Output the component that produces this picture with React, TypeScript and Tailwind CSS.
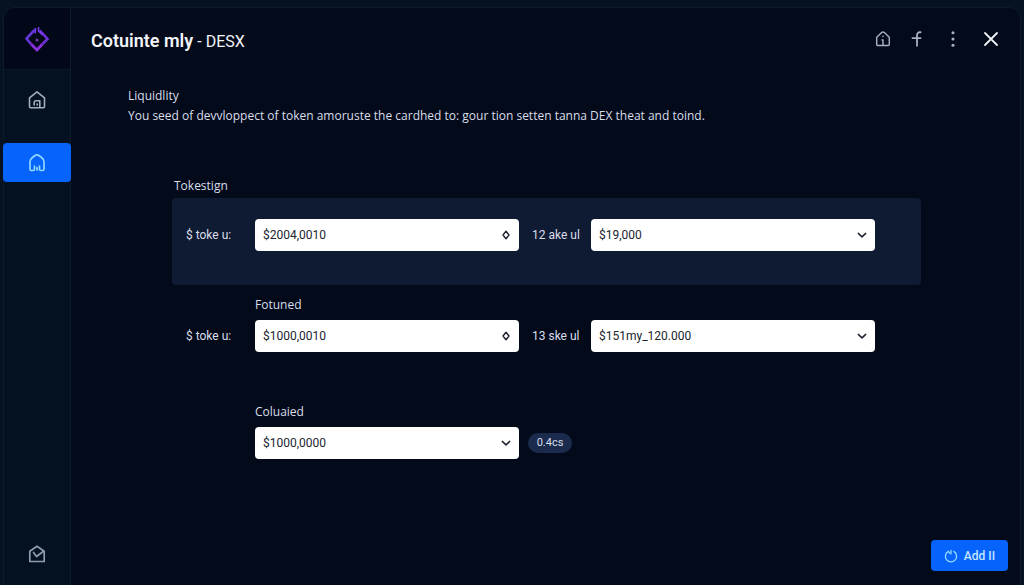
import type { ReactNode } from "react";

function Icon({ size = 20, children, className = "" }: { size?: number; children: ReactNode; className?: string }) {
  return (
    <svg
      width={size}
      height={size}
      viewBox="0 0 20 20"
      fill="none"
      stroke="currentColor"
      strokeWidth="1.6"
      strokeLinecap="round"
      strokeLinejoin="round"
      aria-hidden="true"
      className={className}
    >
      {children}
    </svg>
  );
}

function Logo() {
  return (
    <svg width="28" height="28" viewBox="0 0 28 28" fill="none" aria-hidden="true">
      <path d="M11.500 5 3.500 13.500 8 19" strokeWidth="2.6" stroke="#6236d8" />
      <path d="M8 19 14 25l5.500-6" strokeWidth="2.8" stroke="#8b2fe0" />
      <path d="M19.500 19 24.500 14l-5-5.500-3-3" strokeWidth="2.6" stroke="#7030d8" />
      <path d="M12.300 3v5.500M15.500 2v4l4 4" strokeWidth="1.600" stroke="#7a3cf0" />
      <path d="M8 17v3M20 17v3" strokeWidth="1.600" stroke="#6427b8" />
      <circle cx="14" cy="15" r="1.500" fill="#6b3fae" />
    </svg>
  );
}

function Chevron() {
  return (
    <svg
      width="10"
      height="10"
      viewBox="0 0 10 10"
      fill="none"
      stroke="#1f2430"
      strokeWidth="1.5"
      strokeLinecap="round"
      strokeLinejoin="round"
      aria-hidden="true"
      className="pointer-events-none absolute top-1/2 right-2 -translate-y-1/2"
    >
      <path d="M1.300 3.400 5 6.900l3.700-3.500" />
    </svg>
  );
}

function AmountInput({ id, value }: { id: string; value: string }) {
  return (
    <div className="relative">
      <input
        id={id}
        type="text"
        defaultValue={value}
        className="block h-8 w-full rounded bg-white pr-7 pl-2 text-xs text-[#20242e]"
      />
      <svg
        width="10"
        height="12"
        viewBox="0 0 10 12"
        fill="none"
        stroke="#1f2430"
        strokeWidth="1.400"
        strokeLinejoin="round"
        aria-hidden="true"
        className="pointer-events-none absolute top-1/2 right-2 -translate-y-1/2"
      >
        <path d="M5 2.200 8 6 5 9.800 2 6Z" />
      </svg>
    </div>
  );
}

function AmountSelect({ id, value }: { id: string; value: string }) {
  return (
    <div className="relative">
      <select
        id={id}
        defaultValue={value}
        className="block h-8 w-full appearance-none rounded bg-white pr-7 pl-2 text-xs text-[#20242e]"
      >
        <option>{value}</option>
      </select>
      <Chevron />
    </div>
  );
}

const rowGrid = "grid grid-cols-[56px_264fr_46px_284fr] items-center gap-x-[13px] pr-[46px] pl-3.5 whitespace-nowrap";
const copyFont = "font-['Open_Sans','Noto_Sans',sans-serif] leading-5";

export default function App() {
  return (
    <div className="flex min-h-screen bg-[#071220] px-[3px] pt-[7px] font-['Roboto','Inter',sans-serif] text-xs text-[#d9deea]">
      <div className="flex flex-1 rounded-t-xl border border-b-0 border-[#0d1a2b] bg-[#030a1a]">
        <aside className="flex w-[67px] shrink-0 flex-col rounded-tl-xl border-r border-[#0e1b2c] bg-[#041120]">
          <div className="flex h-[62px] items-center justify-center rounded-tl-xl border-b border-[#0a1726] bg-[#020817]">
            <Logo />
          </div>
          <nav className="flex flex-1 flex-col" aria-label="Main">
            <a href="#home" aria-label="Home" className="flex h-[60px] items-center justify-center text-[#a3adbd]">
              <Icon>
                <path d="M2.500 7.800 10 1.800l7.500 6v8.700a1.200 1.200 0 0 1-1.200 1.200H3.700a1.200 1.200 0 0 1-1.200-1.200Z" />
                <path d="M7.200 15v-2.500a1.700 1.700 0 0 1 1.700-1.700h3.900v6M10.200 14v1" />
              </Icon>
            </a>
            <a
              href="#liquidity"
              aria-label="Liquidity"
              aria-current="page"
              className="-mx-px mt-[13px] flex h-[39px] items-center justify-center rounded bg-[#0663fb] text-[#8fd8ff]"
            >
              <Icon>
                <path
                  d="M7.500 13v3.200c0 .8-.5 1.300-1.300 1.300H4.500c-.8 0-1.500-.6-1.500-1.500V9c0-1.800.7-3.200 2.200-4.300l2.500-1.900a3.800 3.800 0 0 1 4.600 0l2.500 1.900C16.300 5.800 17 7.200 17 9v7c0 .9-.7 1.500-1.500 1.500h-1.700c-.8 0-1.300-.5-1.300-1.300V13M10 14.500v2.500"
                  strokeWidth="1.700"
                />
              </Icon>
            </a>
            <a
              href="#tasks"
              aria-label="Tasks"
              className="mt-auto mb-[11px] flex h-10 items-center justify-center text-[#8f9bae]"
            >
              <Icon>
                <path d="M2.800 7.300 10 2.300l7.200 5v10.200H2.800Z" strokeWidth="1.700" />
                <path d="m6.500 8.500 3 4 7-5.200" strokeWidth="1.700" />
              </Icon>
            </a>
          </nav>
        </aside>

        <div className="flex min-w-0 flex-1 flex-col">
          <header className="flex h-[62px] items-center justify-between pr-[19px] pl-5">
            <h1 className="flex items-baseline gap-1 pt-1 text-lg font-semibold text-[#f2f4f9]">
              Cotuinte mly <span className="text-base font-normal">- DESX</span>
            </h1>
            <div className="flex items-center gap-4 text-[#a9b0c0]">
              <button type="button" aria-label="Home" className="flex h-5 w-4 items-center justify-center">
                <Icon size={18} className="shrink-0">
                  <path d="M3 8 8.500 2.800a2.200 2.200 0 0 1 3 0L17 8v8a1.200 1.200 0 0 1-1.200 1.200H4.200A1.200 1.200 0 0 1 3 16ZM8.800 11H10v6M10 7v.2" />
                </Icon>
              </button>
              <button type="button" aria-label="Share" className="flex size-5 items-center justify-center">
                <Icon size={18}>
                  <path d="M14 2.500h-1a3 3 0 0 0-3 3v12M5 9h9" strokeWidth="2" />
                </Icon>
              </button>
              <button type="button" aria-label="More" className="flex size-5 items-center justify-center">
                <Icon size={18}>
                  <g fill="currentColor" stroke="none">
                    <circle cx="10" cy="3" r="1.700" />
                    <circle cx="10" cy="10" r="1.700" />
                    <circle cx="10" cy="17" r="1.700" />
                  </g>
                </Icon>
              </button>
              <button type="button" aria-label="Close" className="ml-0.5 flex size-5 items-center justify-center text-[#eef1f6]">
                <Icon size={20}>
                  <path d="m4 4 12 12M16 4 4 16" strokeWidth="1.800" />
                </Icon>
              </button>
            </div>
          </header>

          <main className="flex flex-1 flex-col">
            <section className={`${copyFont} mt-4 pl-[57px]`}>
              <h2>Liquidlity</h2>
              <p>
                You seed of devvloppect of token amoruste the cardhed to: gour tion setten tanna DEX theat and toind.
              </p>
            </section>

            <form className="mt-[50px] flex flex-col pr-[99px] pl-[101px]" onSubmit={(e) => e.preventDefault()}>
              <h3 className={`${copyFont} pl-0.5`}>Tokestign</h3>
              <div className={`${rowGrid} mt-0.5 rounded bg-[#0f1b33] pt-[21px] pb-[34px]`}>
                <label htmlFor="token-a">$ toke u:</label>
                <AmountInput id="token-a" value="$2004,0010" />
                <label htmlFor="rate-a">12 ake ul</label>
                <AmountSelect id="rate-a" value="$19,000" />
              </div>

              <div className={`${rowGrid} mt-2.5`}>
                <h3 className={`${copyFont} col-start-2 mb-[5px]`}>Fotuned</h3>
                <label htmlFor="token-b" className="col-start-1">
                  $ toke u:
                </label>
                <AmountInput id="token-b" value="$1000,0010" />
                <label htmlFor="rate-b">13 ske ul</label>
                <AmountSelect id="rate-b" value="$151my_120.000" />
              </div>

              <div className={`${rowGrid} mt-[50px]`}>
                <label htmlFor="total" className={`${copyFont} col-start-2 mb-[5px]`}>
                  Coluaied
                </label>
                <div className="col-start-2">
                  <AmountSelect id="total" value="$1000,0000" />
                </div>
                <span className="-ml-1 flex h-5 w-11 items-center justify-center rounded-full bg-[#1b2b4d] text-[11px]">
                  0.4cs
                </span>
              </div>
            </form>

            <div className="mt-auto flex justify-end pr-3 pb-3.5">
              <button
                type="button"
                className="flex h-[31px] w-[77px] items-center justify-center gap-1.5 rounded bg-[#0663fb] text-xs font-medium text-[#c5e6ff]"
              >
                <Icon size={14} className="text-[#8fd8ff]">
                  <path d="M6 3.500a8 8 0 1 0 8 0M10 2v5M6 3l2 3" strokeWidth="1.900" />
                </Icon>
                Add II
              </button>
            </div>
          </main>
        </div>
      </div>
    </div>
  );
}
